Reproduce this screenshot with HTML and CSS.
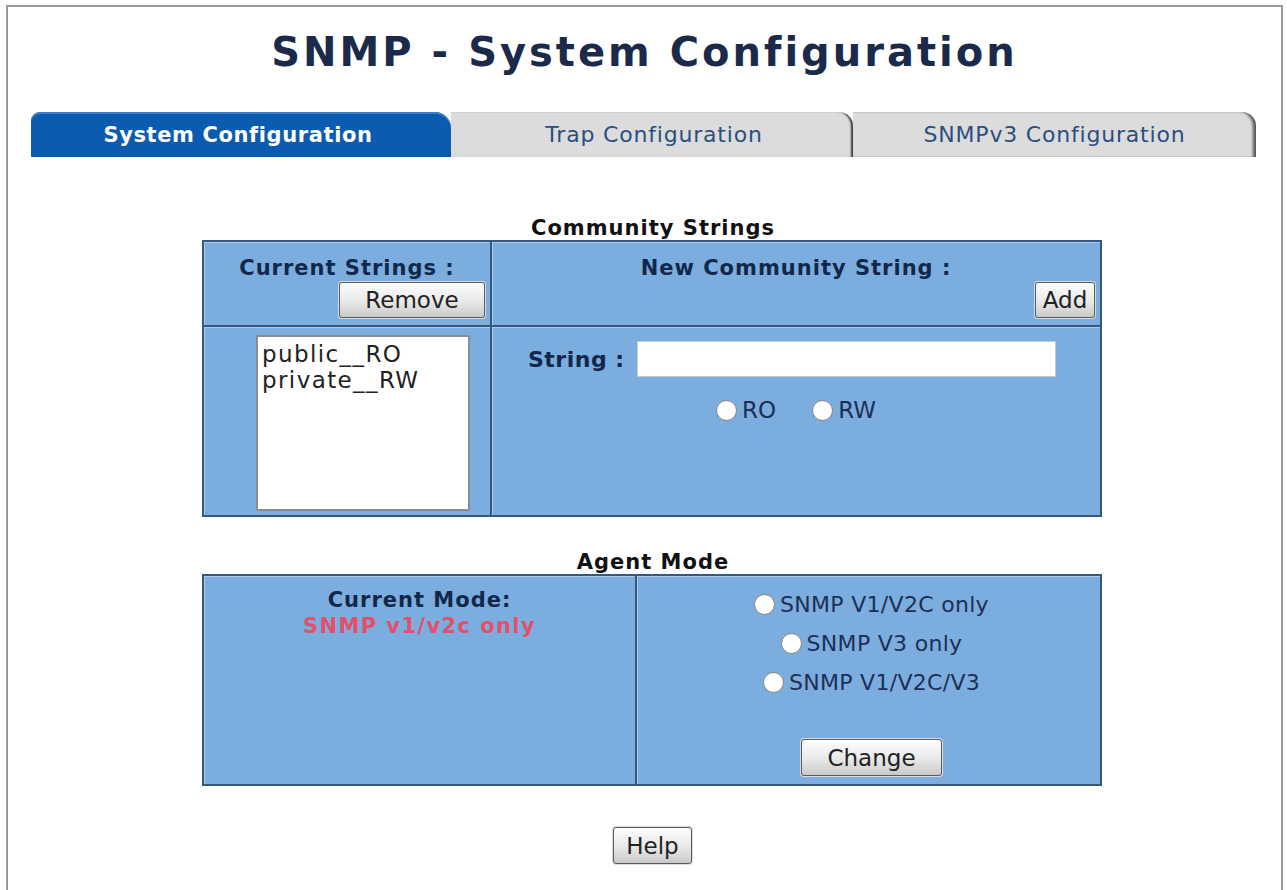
FILE: index.html
```html
<!DOCTYPE html>
<html lang="en">
<head>
    <meta charset="UTF-8">
    <title>SNMP - System Configuration</title>
    <link rel="stylesheet" href="styles.css">
</head>
<body>
    <div class="frame">
        <h1>SNMP - System Configuration</h1>

        <div class="tabs">
            <div class="tab tab-active">System Configuration</div>
            <div class="tab tab-mid">Trap Configuration</div>
            <div class="tab tab-last">SNMPv3 Configuration</div>
        </div>

        <form class="section community">
            <div class="caption">Community Strings</div>
            <table class="grid">
                <tr class="head-row">
                    <td class="col-left">
                        <div class="label">Current Strings :</div>
                        <div class="btn-line"><button type="button" class="btn btn-remove">Remove</button></div>
                    </td>
                    <td class="col-right">
                        <div class="label">New Community String :</div>
                        <div class="btn-line"><button type="button" class="btn btn-add">Add</button></div>
                    </td>
                </tr>
                <tr class="body-row">
                    <td class="col-left">
                        <select class="list" size="8">
                            <option>public__RO</option>
                            <option>private__RW</option>
                        </select>
                    </td>
                    <td class="col-right">
                        <div class="string-line">
                            <span class="label">String :</span>
                            <input type="text" class="string-input">
                        </div>
                        <div class="access">
                            <label><input type="radio" name="access" value="ro">RO</label>
                            <label><input type="radio" name="access" value="rw">RW</label>
                        </div>
                    </td>
                </tr>
            </table>
        </form>

        <form class="section agent">
            <div class="caption">Agent Mode</div>
            <table class="grid">
                <tr>
                    <td class="mode-left">
                        <div class="label">Current Mode:</div>
                        <div class="mode-value">SNMP v1/v2c only</div>
                    </td>
                    <td class="mode-right">
                        <div class="mode-options">
                            <label><input type="radio" name="mode" value="1">SNMP V1/V2C only</label>
                            <label><input type="radio" name="mode" value="2">SNMP V3 only</label>
                            <label><input type="radio" name="mode" value="3">SNMP V1/V2C/V3</label>
                            <div class="change-line"><button type="button" class="btn btn-change">Change</button></div>
                        </div>
                    </td>
                </tr>
            </table>
        </form>

        <div class="help-line"><button type="button" class="btn btn-help">Help</button></div>
    </div>
</body>
</html>
```

FILE: styles.css
```css
body {
    margin: 0;
    padding: 5px 4px 0 6px;
    font-family: "DejaVu Sans", Verdana, sans-serif;
    background: #fff;
}
.frame {
    border: 2px solid #9a9a9a;
    border-bottom: none;
    min-height: 890px;
    box-sizing: border-box;
}
h1 {
    margin: 0;
    padding-top: 22px;
    height: 82px;
    box-sizing: border-box;
    text-align: center;
    font-size: 40px;
    letter-spacing: 3px;
    color: #1b2a4a;
}
.tabs {
    display: flex;
    margin: 23px 0 0 23px;
    height: 45px;
}
.tab {
    display: flex;
    align-items: center;
    justify-content: center;
    font-size: 22px;
    letter-spacing: 0.8px;
    color: #2a4f80;
    background: #dcdcdc;
    box-sizing: border-box;
}
.tab-active {
    width: 420px;
    background: #0b5bb0;
    color: #fff;
    font-weight: bold;
    font-size: 21px;
    letter-spacing: 0.6px;
    border-radius: 9px 16px 0 0;
    box-shadow: inset 0 2px 0 #3a7fc8;
    padding-right: 6px;
}
.tab-mid {
    width: 402px;
    border-radius: 0 14px 0 0;
    box-shadow: inset -3px 0 2px -1px #3a3a3a;
    padding-left: 4px;
}
.tab-last {
    width: 403px;
    border-radius: 0 14px 0 0;
    box-shadow: inset -4px 0 3px -1px #555;
}
.section {
    margin: 0 0 0 194px;
    width: 900px;
}
.community {
    margin-top: 60px;
}
.agent {
    margin-top: 34px;
}
.caption {
    text-align: center;
    font-weight: bold;
    font-size: 21px;
    letter-spacing: 1px;
    color: #111;
    height: 23px;
    line-height: 23px;
    padding-left: 2px;
}
.grid {
    width: 100%;
    border-collapse: collapse;
    border: 2px solid #35587c;
    background: #7badde;
}
.grid td {
    border: 2px solid #35587c;
    box-shadow: inset 1px 1px 0 #a9cbec;
    vertical-align: top;
    padding: 0;
}
.label {
    font-weight: bold;
    font-size: 21px;
    letter-spacing: 1px;
    color: #12284a;
}
.head-row td {
    height: 83px;
    text-align: center;
}
.head-row .label {
    padding-top: 12px;
    height: 28px;
    line-height: 28px;
}
.col-left {
    width: 286px;
}
.btn-line {
    text-align: right;
    padding-right: 5px;
}
.btn {
    font-family: "DejaVu Sans", Verdana, sans-serif;
    font-size: 23px;
    color: #222;
    background: linear-gradient(#fdfdfd, #e8e8e8 55%, #c9c9c9);
    border: 1px solid #5a5a5a;
    border-radius: 3px;
    box-shadow: 0 0 0 1px #dcdcdc;
    height: 36px;
    padding: 0 10px;
    cursor: pointer;
}
.btn-remove {
    width: 146px;
}
.btn-add {
    width: 60px;
    padding: 0 2px;
}
.body-row td {
    height: 188px;
}
.list {
    display: block;
    margin: 8px 0 0 52px;
    width: 214px;
    height: 176px;
    border: 2px solid #8c8c8c;
    font-family: "DejaVu Sans", Verdana, sans-serif;
    font-size: 23px;
    letter-spacing: 1.4px;
    color: #222;
    padding: 4px 3px 0 4px;
    overflow: hidden;
}
.list option {
    line-height: 25px;
    min-height: 25px;
    padding: 0;
}
.string-line {
    display: flex;
    align-items: center;
    margin: 14px 0 0 36px;
    gap: 12px;
}
.string-line .label {
    font-size: 22px;
    letter-spacing: 0.5px;
}
.string-input {
    width: 419px;
    height: 36px;
    box-sizing: border-box;
    border: 1px solid #c8c8c8;
    background: #fff;
}
.access {
    display: flex;
    justify-content: center;
    gap: 36px;
    margin-top: 20px;
    font-size: 23px;
    color: #1d2f55;
}
.access label,
.mode-options label {
    display: flex;
    align-items: center;
}
input[type=radio] {
    width: 21px;
    height: 21px;
    margin: 0 5px 0 0;
}
.mode-left {
    width: 431px;
    height: 208px;
    text-align: center;
}
.mode-left .label {
    padding-top: 11px;
    line-height: 26px;
}
.mode-value {
    font-weight: bold;
    font-size: 21px;
    letter-spacing: 1.4px;
    line-height: 26px;
    color: #e2506c;
}
.mode-options {
    display: flex;
    flex-direction: column;
    align-items: center;
    padding: 14px 0 0 6px;
    font-size: 22px;
    letter-spacing: 0.3px;
    color: #1d2f55;
    gap: 11px;
}
.mode-options label {
    height: 28px;
}
.change-line {
    margin-top: 32px;
}
.btn-change {
    width: 141px;
    height: 37px;
}
.help-line {
    text-align: center;
    margin-top: 41px;
    padding-left: 16px;
}
.btn-help {
    width: 79px;
    height: 37px;
    padding: 0;
}
```
